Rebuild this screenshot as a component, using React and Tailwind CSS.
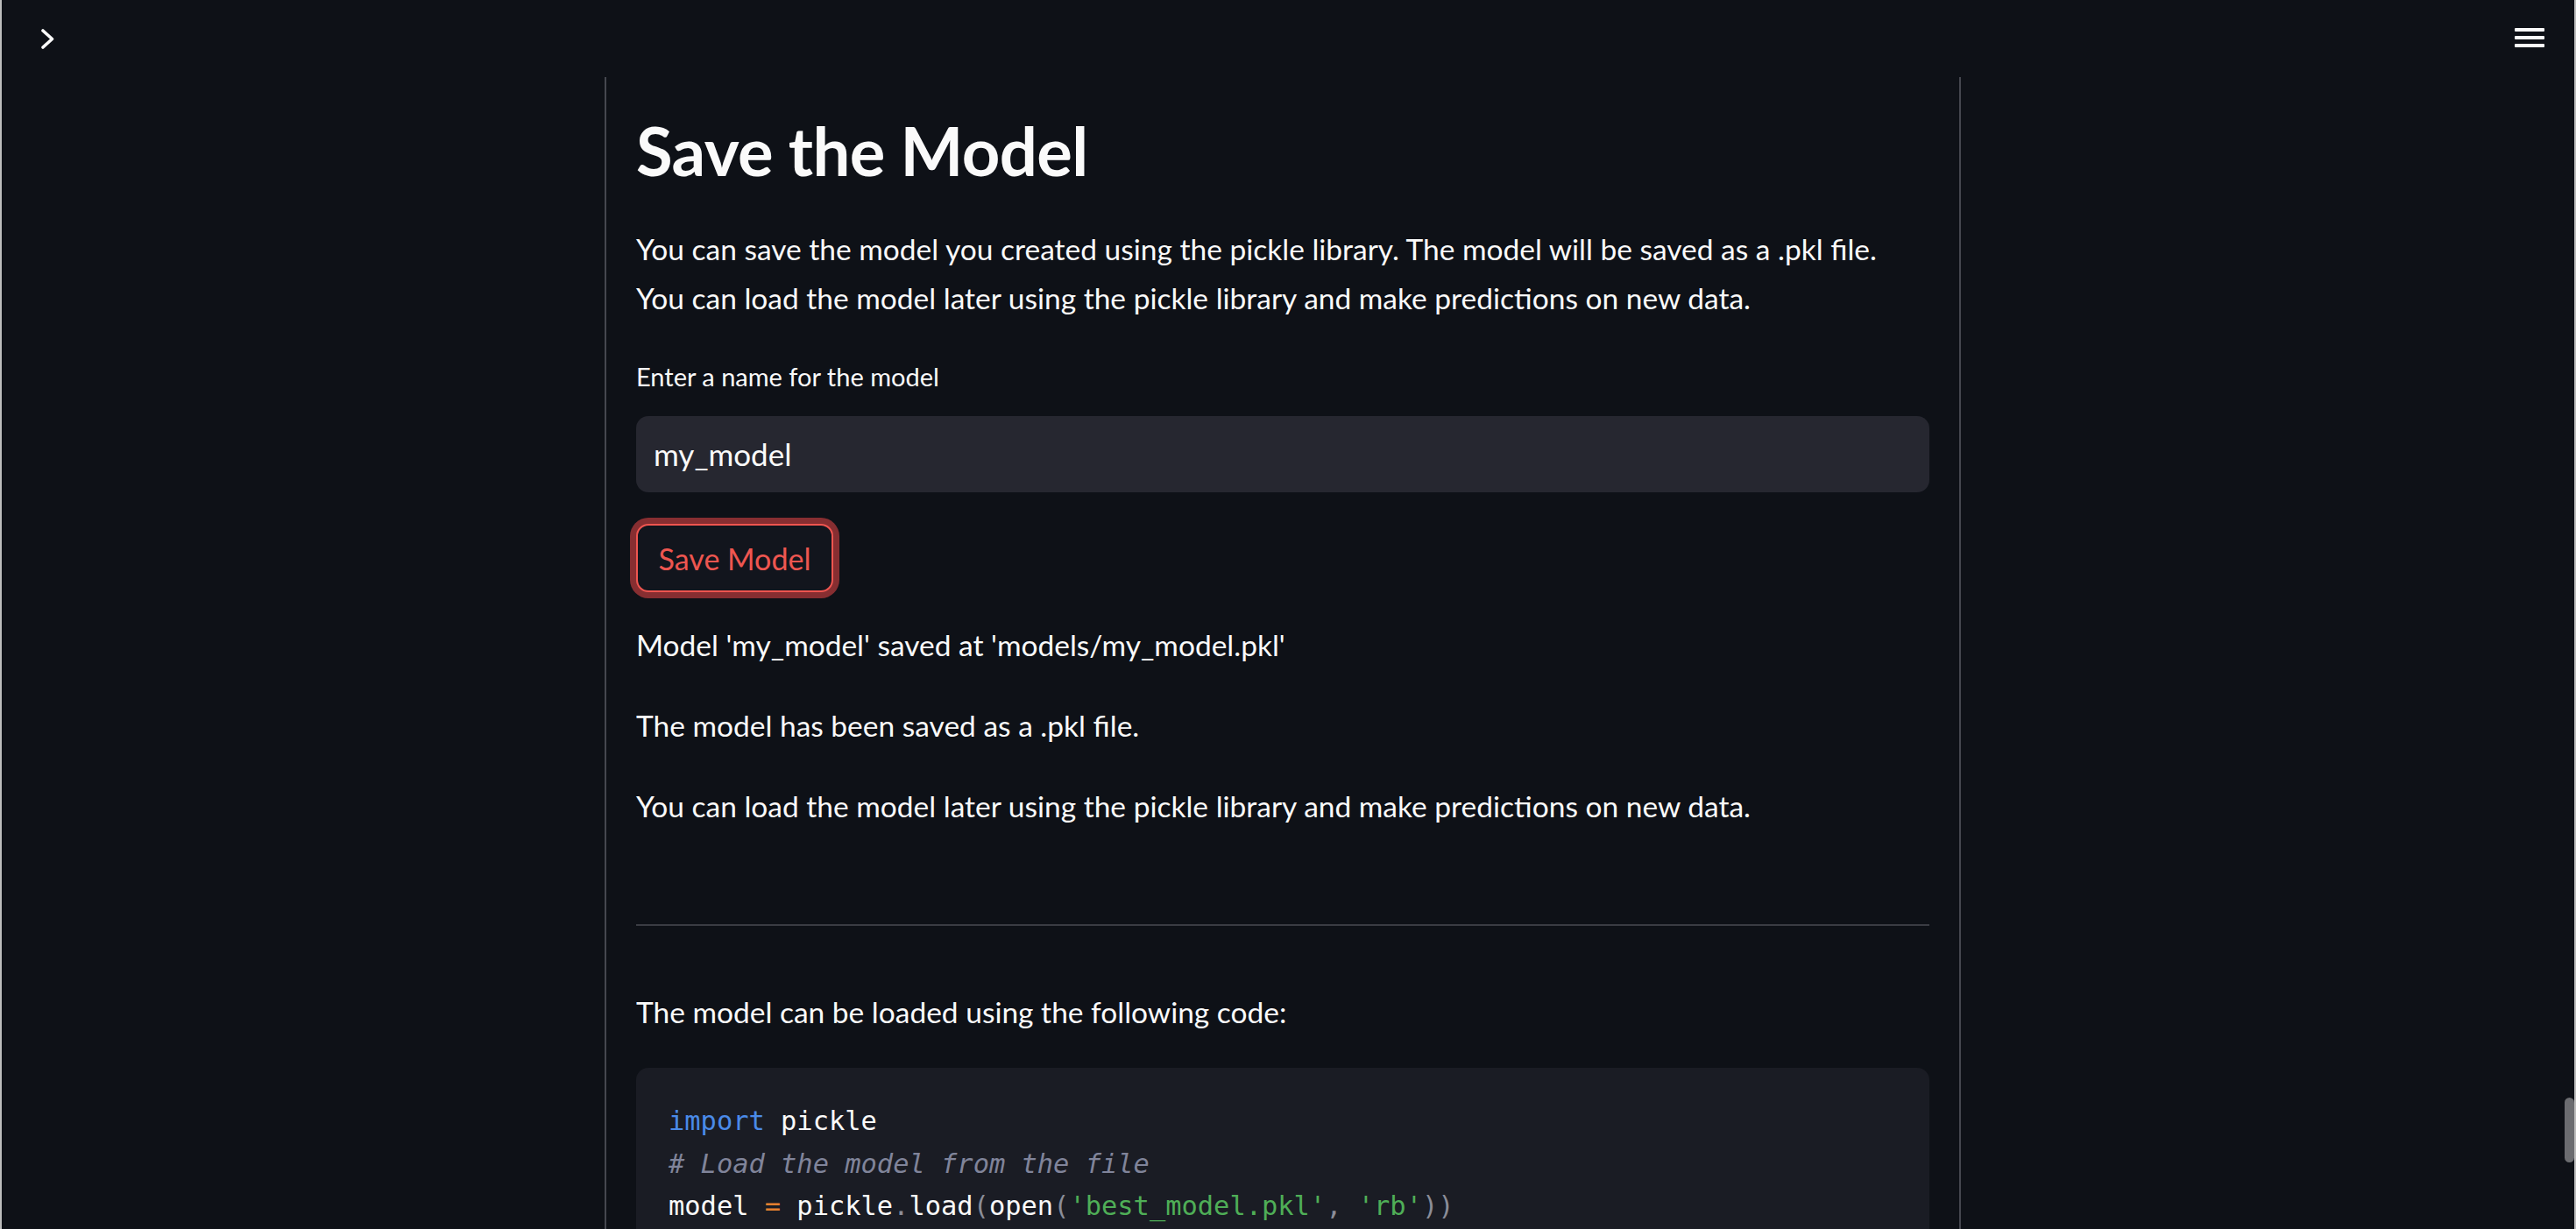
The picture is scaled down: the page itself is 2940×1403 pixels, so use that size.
import React from 'react';

const ChevronIcon = () => (
  <svg width="16" height="24" viewBox="0 0 16 24" fill="none">
    <polyline points="2,2 12.5,11.5 2,21" stroke="#fafafa" strokeWidth="3.6" strokeLinecap="round" strokeLinejoin="round" />
  </svg>
);

const MenuIcon = () => (
  <div className="flex flex-col gap-[5px]">
    <div className="w-[34px] h-[4px] bg-[#fafafa] rounded-[1px]" />
    <div className="w-[34px] h-[4px] bg-[#fafafa] rounded-[1px]" />
    <div className="w-[34px] h-[4px] bg-[#fafafa] rounded-[1px]" />
  </div>
);

const Code = () => (
  <pre className="font-['DejaVu_Sans_Mono',monospace] text-[30.4px] leading-[48.5px] text-[#fafafa]">
    <div>
      <span className="text-[#4a8ae8]">import</span> pickle
    </div>
    <div className="italic text-[#80849a]"># Load the model from the file</div>
    <div>
      model <span className="text-[#e5802f]">=</span> pickle<span className="text-[#8b8d98]">.</span>load<span className="text-[#8b8d98]">(</span>open<span className="text-[#8b8d98]">(</span>
      <span className="text-[#4fae57]">'best_model.pkl'</span>
      <span className="text-[#8b8d98]">, </span>
      <span className="text-[#4fae57]">'rb'</span>
      <span className="text-[#8b8d98]">))</span>
    </div>
  </pre>
);

export default function App() {
  return (
    <div className="relative w-full h-[1403px] overflow-hidden bg-[#0e1117] border-x-2 border-[#bdbdbd] flex flex-col font-['Lato','Liberation_Sans',sans-serif] text-[#fafafa]">
      {/* header */}
      <div className="h-[88px] shrink-0 flex items-start justify-between pl-[45px] pr-[34px]">
        <div className="mt-[33px]">
          <ChevronIcon />
        </div>
        <div className="mt-[32px]">
          <MenuIcon />
        </div>
      </div>

      {/* main block */}
      <div className="flex-1 ml-[688px] w-[1548px] border-x-2 border-[#45474f] pl-[34px] pr-[34px] pt-[38px]">
        <h1 className="text-[76px] leading-[92px] font-bold tracking-[-0.6px]">Save the Model</h1>

        <p className="mt-[38px] text-[33.5px] leading-[56px]">
          You can save the model you created using the pickle library. The model will be saved as a .pkl file.
          <br />
          You can load the model later using the pickle library and make predictions on new data.
        </p>

        <label className="block mt-[42px] text-[29px] leading-[40px]">Enter a name for the model</label>

        <div className="mt-[25px] h-[87px] bg-[#262730] rounded-[14px] flex items-center pl-[20px] text-[35px]">
          my_model
        </div>

        <div className="mt-[36px] w-[225px] h-[78px] rounded-[14px] border-2 border-[#ef5550] bg-[#12151d] shadow-[0_0_0_7px_rgba(255,75,75,0.5)] flex items-center justify-center text-[34px] text-[#ee5650]">
          Save Model
        </div>

        <p className="mt-[32px] text-[33.5px] leading-[56px]">Model 'my_model' saved at 'models/my_model.pkl'</p>
        <p className="mt-[36px] text-[33.5px] leading-[56px]">The model has been saved as a .pkl file.</p>
        <p className="mt-[36px] text-[33.5px] leading-[56px]">
          You can load the model later using the pickle library and make predictions on new data.
        </p>

        <div className="mt-[107px] h-[2px] bg-[#3a3c43]" />

        <p className="mt-[70px] text-[33.5px] leading-[56px]">The model can be loaded using the following code:</p>

        <div className="mt-[36px] bg-[#1a1c24] rounded-[14px] pl-[37px] pt-[37px] pb-[36px]">
          <Code />
        </div>
      </div>

      {/* scrollbar thumb */}
      <div className="absolute right-[0px] top-[1253px] w-[11px] h-[74px] rounded-full bg-[#6b6c70]" />
    </div>
  );
}
